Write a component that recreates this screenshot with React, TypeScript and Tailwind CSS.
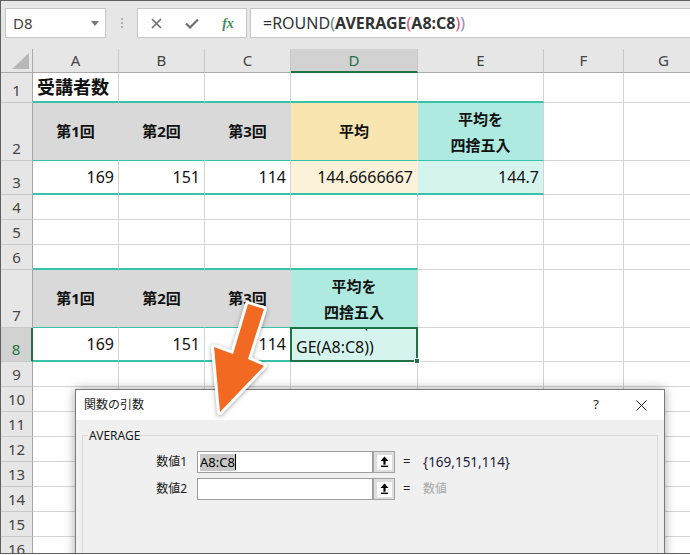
import { ReactNode } from "react";
import clsx from "clsx";
import { twMerge } from "tailwind-merge";

const cn = (...a: any[]) => twMerge(clsx(a));

// column widths A..G
const COLS = ["w-[86px]", "w-[86px]", "w-[86px]", "w-[127px]", "w-[126px]", "w-[80px]", "w-[80px]"];
const LETTERS = ["A", "B", "C", "D", "E", "F", "G"];

const Cell = ({ col, className, children }: { col: number; className?: string; children?: ReactNode }) => (
  <div
    className={cn(
      "shrink-0 h-full bg-white border-r border-b border-[#d4d4d4] flex items-center px-[4px] text-[16px] leading-[20px] text-[#111]",
      COLS[col],
      className
    )}
  >
    {children}
  </div>
);

const Row = ({ n, h, sel, children }: { n: number; h: string; sel?: boolean; children?: ReactNode }) => (
  <div className={cn("flex shrink-0", h)}>
    <div
      className={cn(
        "w-[32px] shrink-0 bg-[#e6e6e6] border-r border-b border-r-[#a6a6a6] border-b-[#c9c9c9] flex items-end justify-center pb-[2px] text-[15px] leading-[20px] text-[#444]",
        sel && "bg-[#d2d2d2] text-[#217346] border-r-2 border-r-[#217346]"
      )}
    >
      {n}
    </div>
    {children}
  </div>
);

const blanks = (from: number) => COLS.slice(from).map((_, i) => <Cell key={from + i} col={from + i} />);

const gray = "bg-[#d9d9d9] border-r-[#d9d9d9] border-b-[#36c2a6] justify-center font-bold text-[15px]";
const tealLine = "border-b-2 border-b-[#36c2a6]";

const RefButton = () => (
  <div className="w-[22px] h-[22px] shrink-0 bg-[#dedede] border border-[#a3a3a3] flex items-center justify-center">
    <div className="w-[15px] h-[15px] bg-white flex items-center justify-center">
      <svg width="9" height="12" viewBox="0 0 10 12">
        <polygon points="5,0 0.5,5 9.5,5" fill="#000" />
        <rect x="3.8" y="4.5" width="2.4" height="4.5" fill="#000" />
        <rect x="1" y="10" width="8" height="1.6" fill="#000" />
      </svg>
    </div>
  </div>
);

export default function App() {
  return (
    <div className="relative w-[690px] h-[554px] overflow-hidden bg-[#e6e6e6] border-t border-l border-b border-[#5f5f5f] font-['Noto_Sans','Noto_Sans_CJK_JP',sans-serif]">
      {/* formula bar */}
      <div className="h-[48px] flex items-start pt-[7px]">
        <div className="ml-[4px] w-[101px] h-[30px] bg-white border border-[#c6c6c6] flex items-center pl-[7px] pr-[6px]">
          <span className="text-[15px] text-[#444]">D8</span>
          <svg className="ml-auto" width="8" height="5" viewBox="0 0 8 5">
            <polygon points="0,0 8,0 4,5" fill="#777" />
          </svg>
        </div>
        <div className="w-[31px] h-[30px] flex flex-col items-center justify-center gap-[2px]">
          <span className="w-[2px] h-[2px] bg-[#b0b0b0]" />
          <span className="w-[2px] h-[2px] bg-[#b0b0b0]" />
          <span className="w-[2px] h-[2px] bg-[#b0b0b0]" />
        </div>
        <div className="w-[110px] h-[30px] bg-white border border-[#c6c6c6] flex items-center">
          <div className="w-[36px] flex justify-center">
            <svg width="11" height="11" viewBox="0 0 11 11">
              <path d="M1 1L10 10M10 1L1 10" stroke="#6e6e6e" strokeWidth="1.6" />
            </svg>
          </div>
          <div className="w-[36px] flex justify-center">
            <svg width="14" height="11" viewBox="0 0 14 11">
              <path d="M1 5.5L5 9.5L13 1.5" stroke="#6e6e6e" strokeWidth="2.2" fill="none" />
            </svg>
          </div>
          <div className="w-[36px] flex justify-center">
            <span className="font-['Liberation_Serif',serif] italic font-bold text-[14px] text-[#3f8e5b]">fx</span>
          </div>
        </div>
        <div className="ml-[3px] flex-1 h-[30px] bg-white border border-r-0 border-[#c6c6c6] flex items-center pl-[12px] text-[16px] text-[#333]">
          <span>=ROUND</span>
          <span className="text-[#6a8a7a]">(</span>
          <span className="font-bold">AVERAGE</span>
          <span className="text-[#d2556d]">(</span>
          <span className="font-bold">A8:C8</span>
          <span className="text-[#d2556d]">)</span>
          <span className="text-[#9b86c4]">)</span>
        </div>
      </div>

      {/* sheet */}
      <div className="flex flex-col">
        <div className="flex h-[24px] shrink-0">
          <div className="w-[32px] shrink-0 bg-[#e6e6e6] border-r border-b border-[#ababab] flex items-end justify-end p-[3px]">
            <svg width="17" height="16" viewBox="0 0 17 16">
              <polygon points="0,16 17,16 17,0" fill="#b8b8b8" />
            </svg>
          </div>
          {LETTERS.map((l, i) => (
            <div
              key={l}
              className={cn(
                "shrink-0 bg-[#e6e6e6] border-r border-b border-r-[#c9c9c9] border-b-[#ababab] flex items-center justify-center text-[15px] text-[#444]",
                COLS[i],
                l === "D" && "bg-[#d2d2d2] text-[#217346] border-b-2 border-b-[#217346]"
              )}
            >
              {l}
            </div>
          ))}
        </div>

        <Row n={1} h="h-[30px]">
          <Cell col={0} className={cn(tealLine, "font-bold text-[18px] pl-[4px]")}>
            受講者数
          </Cell>
          <Cell col={1} className={tealLine} />
          <Cell col={2} className={tealLine} />
          <Cell col={3} className={tealLine} />
          <Cell col={4} className={tealLine} />
          {blanks(5)}
        </Row>

        <Row n={2} h="h-[58px]">
          <Cell col={0} className={gray}>第1回</Cell>
          <Cell col={1} className={gray}>第2回</Cell>
          <Cell col={2} className={gray}>第3回</Cell>
          <Cell col={3} className="bg-[#f8e5b0] border-r-[#f8e5b0] border-b-[#36c2a6] justify-center font-bold text-[15px]">
            平均
          </Cell>
          <Cell col={4} className="bg-[#aeeadf] border-b-[#36c2a6] justify-center text-center font-bold text-[15px] leading-[26px]">
            平均を
            <br />
            四捨五入
          </Cell>
          {blanks(5)}
        </Row>

        <Row n={3} h="h-[34px]">
          <Cell col={0} className={cn(tealLine, "justify-end")}>169</Cell>
          <Cell col={1} className={cn(tealLine, "justify-end")}>151</Cell>
          <Cell col={2} className={cn(tealLine, "justify-end")}>114</Cell>
          <Cell col={3} className={cn("bg-[#fcf2d9] border-r-[#fcf2d9] justify-end", tealLine)}>144.6666667</Cell>
          <Cell col={4} className={cn("bg-[#d6f4ee] justify-end", tealLine)}>144.7</Cell>
          {blanks(5)}
        </Row>

        <Row n={4} h="h-[25px]">{blanks(0)}</Row>
        <Row n={5} h="h-[25px]">{blanks(0)}</Row>
        <Row n={6} h="h-[25px]">
          <Cell col={0} className={tealLine} />
          <Cell col={1} className={tealLine} />
          <Cell col={2} className={tealLine} />
          <Cell col={3} className={tealLine} />
          {blanks(4)}
        </Row>

        <Row n={7} h="h-[58px]">
          <Cell col={0} className={gray}>第1回</Cell>
          <Cell col={1} className={gray}>第2回</Cell>
          <Cell col={2} className={gray}>第3回</Cell>
          <Cell col={3} className="bg-[#aeeadf] border-b-[#36c2a6] justify-center text-center font-bold text-[15px] leading-[26px]">
            平均を
            <br />
            四捨五入
          </Cell>
          {blanks(4)}
        </Row>

        <Row n={8} h="h-[34px]" sel>
          <Cell col={0} className={cn(tealLine, "justify-end")}>169</Cell>
          <Cell col={1} className={cn(tealLine, "justify-end")}>151</Cell>
          <Cell col={2} className={cn(tealLine, "justify-end")}>114</Cell>
          <Cell col={3} className="relative bg-[#d6f4ee] p-0">
            <div className="absolute inset-0 overflow-hidden pl-[5px]">
              <div className="-mt-[16px] leading-[21px] whitespace-nowrap">=ROUND(AVERA</div>
              <div className="mt-[4px] leading-[21px] whitespace-nowrap">GE(A8:C8))</div>
            </div>
            <div className="absolute -left-px -top-px right-[-1px] bottom-[-1px] border-2 border-[#217346]" />
            <div className="absolute right-[-3px] bottom-[-3px] w-[6px] h-[6px] bg-[#217346] border border-white" />
          </Cell>
          {blanks(4)}
        </Row>

        {[9, 10, 11, 12, 13, 14, 15, 16].map((n) => (
          <Row key={n} n={n} h="h-[25px]">
            {blanks(0)}
          </Row>
        ))}
      </div>

      {/* function arguments dialog */}
      <div className="absolute left-[74px] top-[388px] w-[590px] h-[200px] border border-[#7b7b7b] bg-[#f0f0f0] shadow-[0_0_10px_rgba(0,0,0,0.35)] font-['Noto_Sans','Noto_Sans_CJK_JP',sans-serif]">
        <div className="h-[30px] bg-white flex items-center pl-[8px] pr-[17px] text-[12px] text-[#1a1a1a]">
          <span>関数の引数</span>
          <span className="ml-auto w-[12px] text-center text-[13px]">?</span>
          <div className="ml-[33px] w-[12px] flex justify-center">
            <svg width="11" height="11" viewBox="0 0 11 11">
              <path d="M0.5 0.5L10.5 10.5M10.5 0.5L0.5 10.5" stroke="#222" strokeWidth="1" />
            </svg>
          </div>
        </div>
        <div className="px-[6px] pt-[15px]">
          <div className="relative h-[140px] border border-[#d9d9d9] pt-[15px]">
            <span className="absolute -top-[8px] left-[5px] px-[1px] bg-[#f0f0f0] text-[12px] leading-[16px] text-[#1a1a1a]">
              AVERAGE
            </span>
            <div className="flex items-center h-[22px]">
              <span className="w-[104px] text-right text-[12px] text-[#1a1a1a]">数値1</span>
              <div className="ml-[10px] w-[176px] h-[22px] bg-white border border-[#9d9d9d] flex items-center pl-[2px] text-[13px] text-black">
                <span className="bg-[#c8c8c8] leading-[17px]">A8:C8</span>
                <span className="w-px h-[16px] bg-black" />
              </div>
              <RefButton />
              <span className="ml-[8px] w-[10px] text-[13px] text-[#222]">=</span>
              <span className="ml-[10px] text-[13.5px] text-[#1e1e3c]">{"{169,151,114}"}</span>
            </div>
            <div className="mt-[5px] flex items-center h-[22px]">
              <span className="w-[104px] text-right text-[12px] text-[#1a1a1a]">数値2</span>
              <div className="ml-[10px] w-[176px] h-[22px] bg-white border border-[#9d9d9d]" />
              <RefButton />
              <span className="ml-[8px] w-[10px] text-[13px] text-[#222]">=</span>
              <span className="ml-[10px] text-[12px] text-[#a9a9a9]">数値</span>
            </div>
          </div>
        </div>
      </div>

      {/* callout arrow */}
      <svg className="absolute -left-px -top-px pointer-events-none drop-shadow-[0_1px_2px_rgba(0,0,0,0.35)]" width="690" height="555">
        <polygon
          points="248,304 264,309 248,359 264,366 220,412 214,347 233,354"
          fill="#f26a21"
          stroke="#fff"
          strokeWidth="6"
          strokeLinejoin="round"
          paintOrder="stroke"
        />
      </svg>
    </div>
  );
}
